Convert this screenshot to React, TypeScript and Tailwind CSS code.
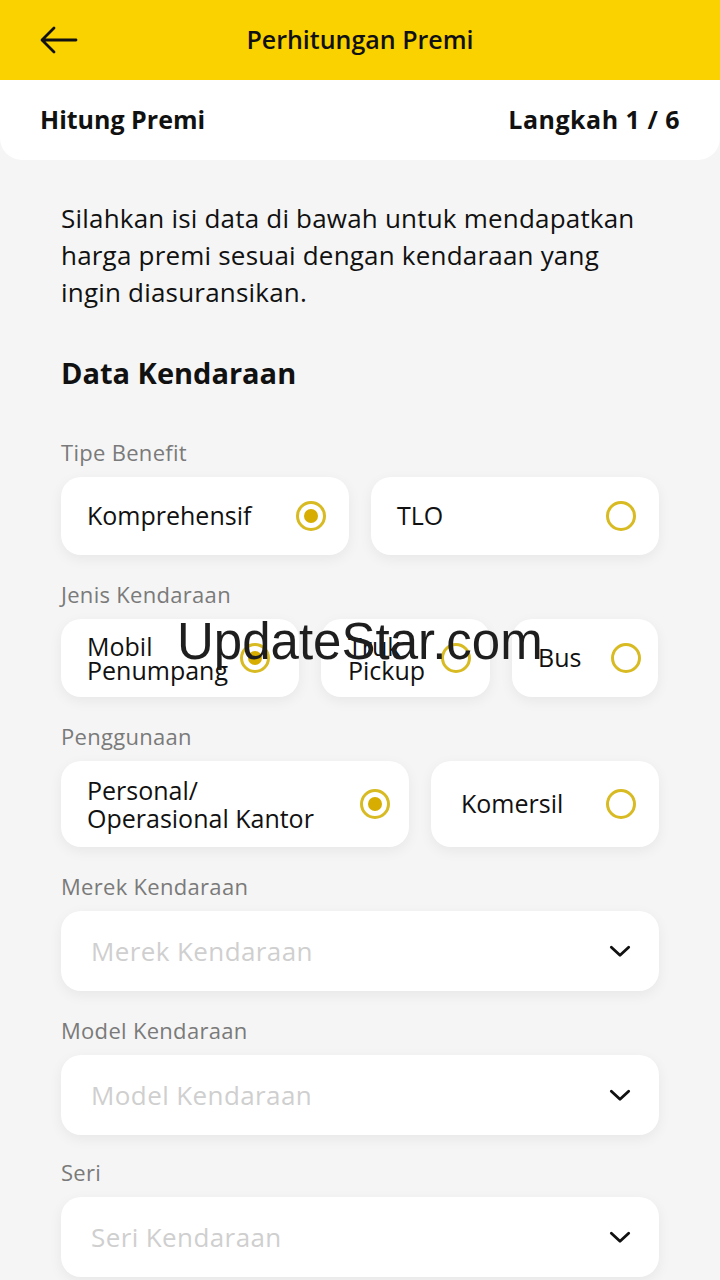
import React from "react";

const font = { fontFamily: "'Open Sans', 'Noto Sans', sans-serif" };

function Radio({ checked }: { checked?: boolean }) {
  return (
    <div className="w-[30px] h-[30px] shrink-0 rounded-full border-[3px] border-[#d8ba22] flex items-center justify-center">
      {checked && <div className="w-[14px] h-[14px] rounded-full bg-[#d6ad00]" />}
    </div>
  );
}

function Option({
  label,
  checked,
  className,
}: {
  label: React.ReactNode;
  checked?: boolean;
  className: string;
}) {
  return (
    <div
      className={`bg-white rounded-[20px] shadow-[0_4px_14px_rgba(0,0,0,0.06)] flex items-center justify-between ${className}`}
    >
      <span className="text-[25px] text-[#111]">{label}</span>
      <Radio checked={checked} />
    </div>
  );
}

function Label({ children, className = "" }: { children: React.ReactNode; className?: string }) {
  return <div className={`text-[22px] tracking-[0.3px] text-[#7a7a7a] leading-[26px] ${className}`}>{children}</div>;
}

function Select({ placeholder }: { placeholder: string }) {
  return (
    <div className="mt-[12px] h-[80px] bg-white rounded-[20px] shadow-[0_4px_14px_rgba(0,0,0,0.06)] flex items-center justify-between pl-[30px] pr-[26px]">
      <span className="text-[26px] tracking-[0.4px] text-[#cfcfcf]">{placeholder}</span>
      <svg width="26" height="26" viewBox="0 0 24 24" fill="none">
        <path d="M4 8.5l8 7.5 8-7.5" stroke="#111" strokeWidth="2.6" strokeLinecap="round" strokeLinejoin="round" />
      </svg>
    </div>
  );
}

export default function App() {
  return (
    <div className="relative w-[720px] h-[1280px] overflow-hidden bg-[#f5f5f5]" style={font}>
      {/* Header */}
      <header className="h-[80px] bg-[#f9d200] grid grid-cols-[1fr_auto_1fr] items-center px-[40px]">
        <svg width="38" height="28" viewBox="0 0 38 28" fill="none">
          <path d="M36 14H3M14 2L2 14l12 12" stroke="#111" strokeWidth="2.8" strokeLinecap="round" strokeLinejoin="round" />
        </svg>
        <h1 className="text-[25px] font-semibold text-[#111]">Perhitungan Premi</h1>
        <div />
      </header>

      {/* Step bar */}
      <div className="h-[80px] bg-white rounded-b-[22px] flex items-center justify-between px-[40px]">
        <span className="text-[25px] font-bold text-[#111]">Hitung Premi</span>
        <span className="text-[25px] font-bold tracking-[0.5px] text-[#111]">Langkah 1 / 6</span>
      </div>

      <main className="px-[61px] pt-[40px]">
        <p className="text-[26px] leading-[37px] tracking-[0.2px] text-[#111]">
          Silahkan isi data di bawah untuk mendapatkan harga premi sesuai dengan kendaraan yang ingin diasuransikan.
        </p>

        <h2 className="mt-[44px] text-[29px] font-bold text-[#111] leading-[36px]">Data Kendaraan</h2>

        <Label className="mt-[48px]">Tipe Benefit</Label>
        <div className="mt-[12px] flex gap-[22px]">
          <Option className="w-[288px] h-[78px] pl-[26px] pr-[23px]" label="Komprehensif" checked />
          <Option className="w-[288px] h-[78px] pl-[26px] pr-[23px]" label="TLO" />
        </div>

        <Label className="mt-[26px]">Jenis Kendaraan</Label>
        <div className="mt-[12px] flex gap-[22px]">
          <Option
            className="w-[238px] h-[78px] pl-[26px] pr-[29px]"
            label={<span className="block leading-[24px]">Mobil<br />Penumpang</span>}
            checked
          />
          <Option
            className="w-[169px] h-[78px] pl-[27px] pr-[19px]"
            label={<span className="block leading-[24px]">Truk<br />Pickup</span>}
          />
          <Option className="w-[146px] h-[78px] pl-[26px] pr-[17px]" label="Bus" />
        </div>

        <Label className="mt-[26px]">Penggunaan</Label>
        <div className="mt-[12px] flex gap-[22px]">
          <Option
            className="w-[348px] h-[86px] pl-[26px] pr-[19px]"
            label={<span className="block leading-[28px]">Personal/<br />Operasional Kantor</span>}
            checked
          />
          <Option className="w-[228px] h-[86px] pl-[30px] pr-[23px]" label="Komersil" />
        </div>

        <Label className="mt-[26px]">Merek Kendaraan</Label>
        <Select placeholder="Merek Kendaraan" />

        <Label className="mt-[26px]">Model Kendaraan</Label>
        <Select placeholder="Model Kendaraan" />

        <Label className="mt-[24px]">Seri</Label>
        <Select placeholder="Seri Kendaraan" />
      </main>

      {/* Watermark */}
      <div
        className="absolute left-[177px] top-[612px] text-[51px] leading-[60px] text-[#1e1e1e] pointer-events-none"
        style={{ fontFamily: "'Liberation Sans', Arial, sans-serif" }}
      >
        UpdateStar.com
      </div>
    </div>
  );
}
